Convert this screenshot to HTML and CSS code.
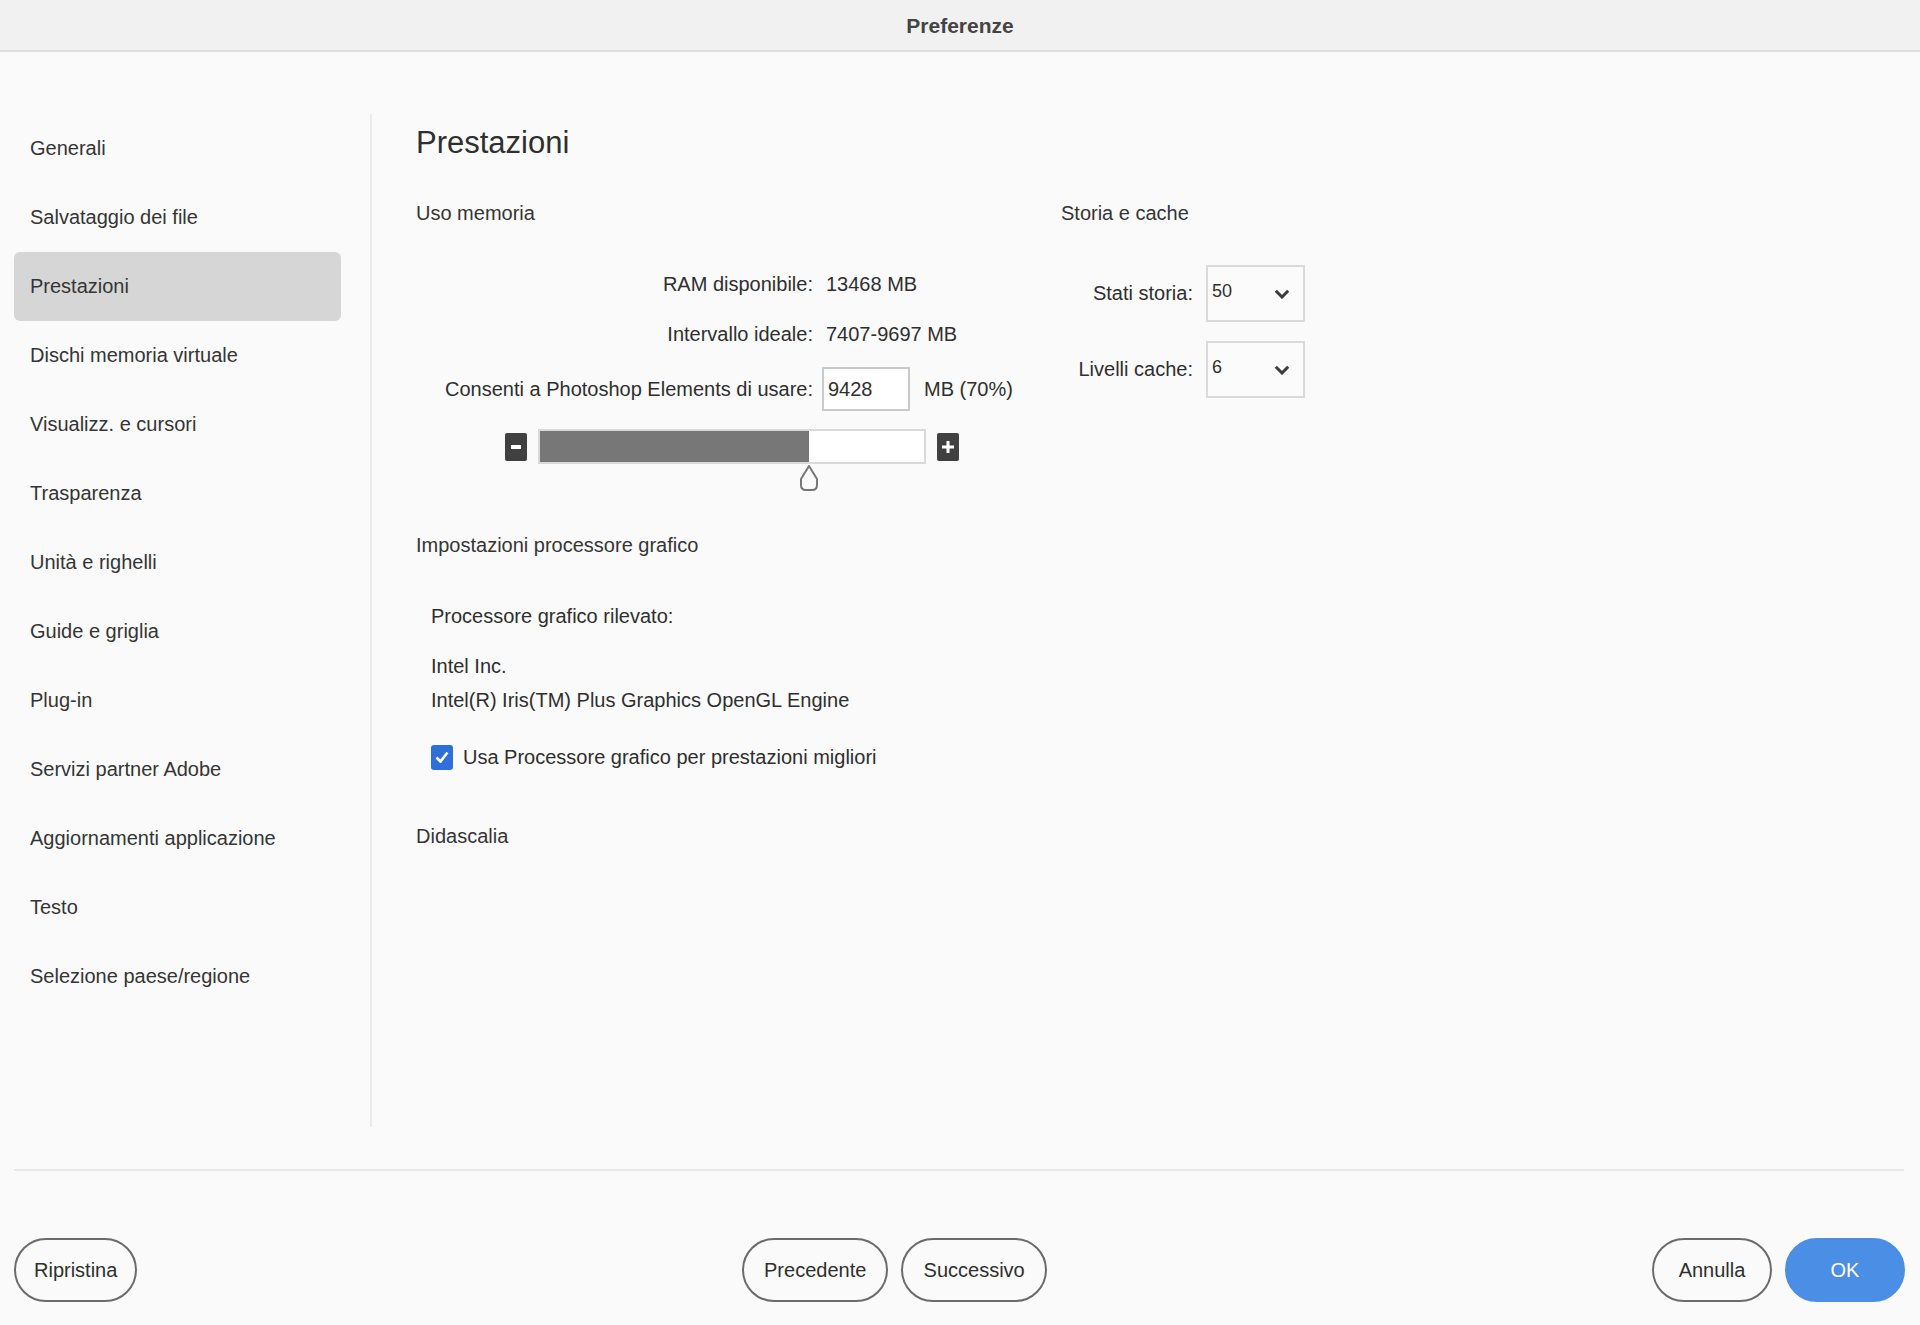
FILE: index.html
```html
<!DOCTYPE html>
<html lang="it">
<head>
    <meta charset="UTF-8">
    <title>Preferenze</title>
    <link rel="stylesheet" href="styles.css">
</head>
<body>
    <div class="titlebar">Preferenze</div>

    <div class="main">
        <nav class="sidebar">
            <div class="nav-item">Generali</div>
            <div class="nav-item">Salvataggio dei file</div>
            <div class="nav-item active">Prestazioni</div>
            <div class="nav-item">Dischi memoria virtuale</div>
            <div class="nav-item">Visualizz. e cursori</div>
            <div class="nav-item">Trasparenza</div>
            <div class="nav-item">Unità e righelli</div>
            <div class="nav-item">Guide e griglia</div>
            <div class="nav-item">Plug-in</div>
            <div class="nav-item">Servizi partner Adobe</div>
            <div class="nav-item">Aggiornamenti applicazione</div>
            <div class="nav-item">Testo</div>
            <div class="nav-item">Selezione paese/regione</div>
        </nav>

        <section class="content">
            <h1 class="page-title">Prestazioni</h1>

            <div class="columns">
                <div class="memory">
                    <h2 class="section-title">Uso memoria</h2>
                    <div class="mem-row first">
                        <span class="mem-label">RAM disponibile:</span>
                        <span class="mem-value">13468 MB</span>
                    </div>
                    <div class="mem-row">
                        <span class="mem-label">Intervallo ideale:</span>
                        <span class="mem-value">7407-9697 MB</span>
                    </div>
                    <div class="mem-row input-row">
                        <span class="mem-label">Consenti a Photoshop Elements di usare:</span>
                        <span class="mem-input">9428</span>
                        <span class="mem-unit">MB (70%)</span>
                    </div>
                    <div class="slider">
                        <span class="step-btn">
                            <svg width="10" height="4" viewBox="0 0 10 4"><rect width="10" height="4" fill="#fff"/></svg>
                        </span>
                        <div class="track">
                            <div class="fill" style="width: 70%"></div>
                            <svg class="thumb" width="20" height="26" viewBox="0 0 20 26">
                                <path d="M10 1 L18 14 V20 Q18 25 13 25 H7 Q2 25 2 20 V14 Z" fill="#fafafa" stroke="#777" stroke-width="2" stroke-linejoin="round"/>
                            </svg>
                        </div>
                        <span class="step-btn">
                            <svg width="12" height="12" viewBox="0 0 12 12"><path d="M6 0 V12 M0 6 H12" stroke="#fff" stroke-width="3"/></svg>
                        </span>
                    </div>
                </div>

                <div class="history">
                    <h2 class="section-title">Storia e cache</h2>
                    <div class="hist-row first">
                        <span class="hist-label">Stati storia:</span>
                        <div class="select">
                            <span class="select-value">50</span>
                            <svg class="chevron" width="16" height="10" viewBox="0 0 16 10"><polyline points="1.8,1.8 8,8 14.2,1.8" fill="none" stroke="#3d3d3d" stroke-width="3"/></svg>
                        </div>
                    </div>
                    <div class="hist-row">
                        <span class="hist-label">Livelli cache:</span>
                        <div class="select">
                            <span class="select-value">6</span>
                            <svg class="chevron" width="16" height="10" viewBox="0 0 16 10"><polyline points="1.8,1.8 8,8 14.2,1.8" fill="none" stroke="#3d3d3d" stroke-width="3"/></svg>
                        </div>
                    </div>
                </div>
            </div>

            <h2 class="section-title gpu-title">Impostazioni processore grafico</h2>
            <div class="gpu-body">
                <div class="gpu-detected">Processore grafico rilevato:</div>
                <div class="gpu-name">Intel Inc.<br>Intel(R) Iris(TM) Plus Graphics OpenGL Engine</div>
                <label class="checkbox-row">
                    <span class="checkbox">
                        <svg width="14" height="12" viewBox="0 0 14 12"><polyline points="1.5,6.5 5.5,10.5 12.5,1.5" fill="none" stroke="#fff" stroke-width="2.6"/></svg>
                    </span>
                    Usa Processore grafico per prestazioni migliori
                </label>
            </div>

            <h2 class="section-title caption-title">Didascalia</h2>
        </section>
    </div>

    <div class="footer-line"></div>

    <div class="footer">
        <div class="btn-group">
            <button class="btn">Ripristina</button>
        </div>
        <div class="btn-group step-group">
            <button class="btn">Precedente</button>
            <button class="btn">Successivo</button>
        </div>
        <div class="btn-group">
            <button class="btn">Annulla</button>
            <button class="btn btn-primary">OK</button>
        </div>
    </div>
</body>
</html>
```

FILE: styles.css
```css
body {
    margin: 0;
    background-color: #fafafa;
    color: #2f2f2f;
    font-family: "Liberation Sans", Arial, sans-serif;
    font-size: 20px;
}
.titlebar {
    height: 50px;
    line-height: 52px;
    background-color: #f1f1f1;
    border-bottom: 2px solid #dedede;
    text-align: center;
    font-weight: bold;
    font-size: 21px;
    color: #444;
}
.main {
    display: flex;
    height: 1075px;
    box-sizing: border-box;
    padding-top: 62px;
}
.sidebar {
    width: 356px;
    padding-left: 14px;
    border-right: 2px solid #ebebeb;
}
.nav-item {
    width: 327px;
    box-sizing: border-box;
    height: 69px;
    line-height: 69px;
    padding-left: 16px;
    border-radius: 6px;
    color: #353535;
    white-space: nowrap;
}
.nav-item.active {
    background-color: #d6d6d6;
}
.content {
    flex: 1;
    padding-left: 44px;
}
.page-title {
    margin: 7px 0 0;
    font-size: 31px;
    line-height: 44px;
    font-weight: normal;
    color: #2f2f2f;
}
.columns {
    display: flex;
}
.memory {
    width: 645px;
}
.section-title {
    margin: 33px 0 0;
    font-size: 20px;
    line-height: 30px;
    font-weight: normal;
    color: #353535;
}
.mem-row {
    display: flex;
    align-items: center;
    gap: 9px;
    height: 44px;
    margin-top: 6px;
    white-space: nowrap;
}
.mem-row.first {
    margin-top: 34px;
}
.mem-row.input-row {
    margin-top: 11px;
}
.mem-label {
    width: 397px;
    text-align: right;
}
.mem-value {
    padding-left: 4px;
}
.mem-input {
    width: 88px;
    height: 44px;
    box-sizing: border-box;
    border: 2px solid #c9c9c9;
    background-color: #fff;
    padding-left: 4px;
    line-height: 40px;
}
.mem-unit {
    margin-left: 5px;
}
.slider {
    display: flex;
    align-items: center;
    gap: 11px;
    margin: 18px 0 0 89px;
}
.step-btn {
    width: 22px;
    height: 28px;
    background-color: #404040;
    border-radius: 2px;
    display: flex;
    align-items: center;
    justify-content: center;
}
.track {
    position: relative;
    width: 388px;
    height: 35px;
    box-sizing: border-box;
    border: 2px solid #d9d9d9;
    background-color: #fff;
}
.fill {
    height: 100%;
    background-color: #777;
}
.thumb {
    position: absolute;
    left: calc(70% - 10px);
    top: calc(100% + 3px);
}
.hist-row {
    display: flex;
    align-items: center;
    gap: 13px;
    margin-top: 19px;
    white-space: nowrap;
}
.hist-row.first {
    margin-top: 37px;
}
.hist-label {
    width: 132px;
    text-align: right;
}
.select {
    width: 99px;
    height: 57px;
    box-sizing: border-box;
    border: 2px solid #dadada;
    background-color: #fbfbfb;
    display: flex;
    justify-content: space-between;
    padding: 0 13px 0 4px;
}
.select-value {
    font-size: 18px;
    line-height: 22px;
    padding-top: 13px;
}
.chevron {
    align-self: center;
}
.gpu-title {
    margin-top: 66px;
}
.gpu-body {
    padding-left: 15px;
}
.gpu-detected {
    margin-top: 41px;
    line-height: 30px;
}
.gpu-name {
    margin-top: 18px;
    line-height: 34px;
}
.checkbox-row {
    display: flex;
    align-items: center;
    gap: 10px;
    margin-top: 25px;
    line-height: 30px;
}
.checkbox {
    width: 22px;
    height: 25px;
    background-color: #2e6fdc;
    border-radius: 3px;
    display: flex;
    align-items: center;
    justify-content: center;
}
.caption-title {
    margin-top: 49px;
}
.footer-line {
    height: 2px;
    background-color: #e8e8e8;
    margin: 42px 16px 0 14px;
}
.footer {
    display: flex;
    justify-content: space-between;
    padding: 0 15px 0 14px;
    margin-top: 67px;
}
.btn-group {
    display: flex;
    gap: 13px;
}
.btn {
    height: 64px;
    min-width: 120px;
    box-sizing: border-box;
    padding: 0 18px;
    border: 2px solid #6b6b6b;
    border-radius: 32px;
    background-color: transparent;
    font: inherit;
    color: #2f2f2f;
}
.step-group .btn {
    min-width: 146px;
}
.btn-primary {
    background-color: #4a8ee6;
    border-color: #4a8ee6;
    color: #fff;
}
```
